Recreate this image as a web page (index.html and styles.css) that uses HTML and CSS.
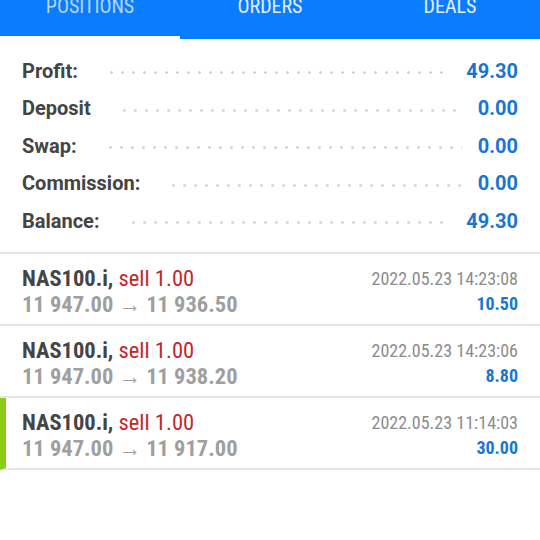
FILE: index.html
```html
<!DOCTYPE html>
<html lang="en">
<head>
    <meta charset="UTF-8">
    <title>History</title>
    <link rel="stylesheet" href="styles.css">
</head>
<body>
    <div class="tabs">
        <div class="tab">POSITIONS</div>
        <div class="tab">ORDERS</div>
        <div class="tab">DEALS</div>
    </div>
    <div class="tab-line">
        <div class="tab-line-left"></div>
        <div class="tab-line-right"></div>
    </div>

    <div class="summary">
        <div class="row"><span class="label">Profit:</span><span class="dots"></span><span class="value">49.30</span></div>
        <div class="row"><span class="label">Deposit</span><span class="dots"></span><span class="value">0.00</span></div>
        <div class="row"><span class="label">Swap:</span><span class="dots"></span><span class="value">0.00</span></div>
        <div class="row"><span class="label">Commission:</span><span class="dots"></span><span class="value">0.00</span></div>
        <div class="row"><span class="label">Balance:</span><span class="dots"></span><span class="value">49.30</span></div>
    </div>

    <div class="deals">
        <div class="deal">
            <div class="deal-left">
                <div class="deal-title"><b>NAS100.i,</b> <span class="sell">sell 1.00</span></div>
                <div class="deal-price">11 947.00 &rarr; 11 936.50</div>
            </div>
            <div class="deal-right">
                <div class="deal-time">2022.05.23 14:23:08</div>
                <div class="deal-profit">10.50</div>
            </div>
        </div>
        <div class="deal">
            <div class="deal-left">
                <div class="deal-title"><b>NAS100.i,</b> <span class="sell">sell 1.00</span></div>
                <div class="deal-price">11 947.00 &rarr; 11 938.20</div>
            </div>
            <div class="deal-right">
                <div class="deal-time">2022.05.23 14:23:06</div>
                <div class="deal-profit">8.80</div>
            </div>
        </div>
        <div class="deal selected">
            <div class="deal-left">
                <div class="deal-title"><b>NAS100.i,</b> <span class="sell">sell 1.00</span></div>
                <div class="deal-price">11 947.00 &rarr; 11 917.00</div>
            </div>
            <div class="deal-right">
                <div class="deal-time">2022.05.23 11:14:03</div>
                <div class="deal-profit">30.00</div>
            </div>
        </div>
    </div>
</body>
</html>
```

FILE: styles.css
```css
* {
    margin: 0;
    padding: 0;
    box-sizing: border-box;
}

body {
    background-color: #fff;
    font-family: Roboto, "Liberation Sans", sans-serif;
    width: 540px;
    height: 540px;
    overflow: hidden;
}

.tabs {
    display: flex;
    background-color: #0a7cff;
    margin-top: -12px;
    height: 48px;
}

.tab {
    flex: 1;
    text-align: center;
    color: #e3efff;
    font-family: "Roboto Condensed", "Liberation Sans Narrow", Roboto, sans-serif;
    font-size: 20px;
    line-height: 36px;
}

.tab:first-child {
    color: #b8d6fb;
}

.tab-line {
    display: flex;
    height: 3px;
}

.tab-line-left {
    width: 180px;
    background-color: #fff;
}

.tab-line-right {
    flex: 1;
    background-color: #0a7cff;
}

.summary {
    padding: 13px 22px 12px 22px;
    border-bottom: 2px solid #e6e6e6;
}

.row {
    display: flex;
    align-items: center;
    height: 37.5px;
}

.label {
    font-size: 20px;
    font-weight: 700;
    color: #444;
}

.dots {
    flex: 1;
    height: 3px;
    margin: 4px 16px 0 28px;
    background-image: radial-gradient(circle, #d2d2d2 1.2px, transparent 1.5px);
    background-size: 11px 3px;
}

.value {
    font-size: 20px;
    font-weight: 700;
    color: #1a75d2;
}

.deal {
    display: flex;
    justify-content: space-between;
    height: 72px;
    padding: 11px 22px 0 22px;
    border-bottom: 2px solid #e6e6e6;
    font-family: "Roboto Condensed", "Liberation Sans Narrow", Roboto, sans-serif;
}

.deal.selected {
    border-left: 6px solid #8ccc13;
    padding-left: 16px;
}

.deal-title {
    font-size: 22.5px;
    line-height: 26px;
    color: #444;
}

.sell {
    color: #c4262b;
}

.deal-price {
    font-size: 22.5px;
    line-height: 26px;
    font-weight: 700;
    color: #9f9f9f;
}

.deal-right {
    text-align: right;
    padding-top: 3px;
}

.deal-time {
    font-size: 18px;
    line-height: 22px;
    color: #8c8c8c;
}

.deal-profit {
    font-size: 18px;
    line-height: 28px;
    font-weight: 700;
    color: #1a75d2;
}
```
